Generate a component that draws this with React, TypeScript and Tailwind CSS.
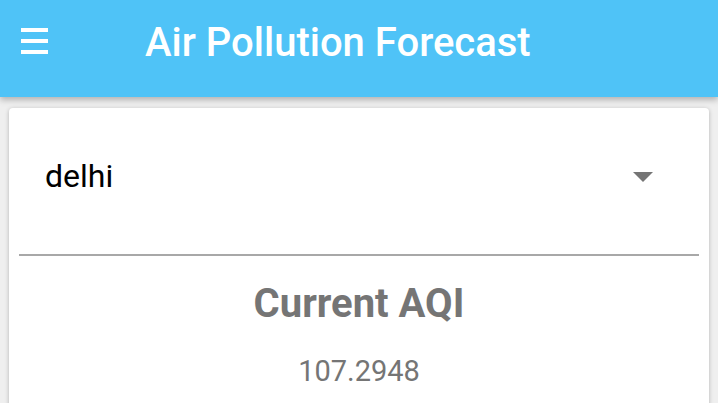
import React from "react";

export default function App() {
  return (
    <div
      className="w-[718px] h-[403px] overflow-hidden bg-[#efefef] flex flex-col"
      style={{ fontFamily: "Roboto, 'Liberation Sans', sans-serif" }}
    >
      <header className="h-[97px] shrink-0 bg-[#4fc3f7] flex items-start shadow-[0_3px_6px_rgba(0,0,0,0.25)] relative z-10">
        <div className="ml-[21px] mt-[28px] w-[27px] flex flex-col gap-[7px]">
          <div className="h-[4px] bg-white" />
          <div className="h-[4px] bg-white" />
          <div className="h-[4px] bg-white" />
        </div>
        <h1 className="ml-[97px] mt-[19px] text-[40px] leading-[48px] font-medium text-white">
          Air Pollution Forecast
        </h1>
      </header>
      <div className="px-[9px] pt-[11px] flex-1">
        <div className="bg-white rounded-[4px] shadow-[0_1px_4px_rgba(0,0,0,0.25)] h-[320px] px-[10px]">
          <div className="h-[148px] border-b-2 border-[#a8a8a8] flex items-start justify-between">
            <span className="ml-[26px] mt-[48px] text-[32px] leading-[40px] text-black">delhi</span>
            <svg width="20" height="10" viewBox="0 0 20 10" className="mt-[64px] mr-[46px]">
              <polygon points="0,0 20,0 10,10" fill="#757575" />
            </svg>
          </div>
          <div className="flex flex-col items-center">
            <div className="mt-[24px] text-[40px] leading-[48px] font-bold text-[#757575]">Current AQI</div>
            <div className="mt-[25px] text-[29px] leading-[36px] text-[#757575]">107.2948</div>
          </div>
        </div>
      </div>
    </div>
  );
}
